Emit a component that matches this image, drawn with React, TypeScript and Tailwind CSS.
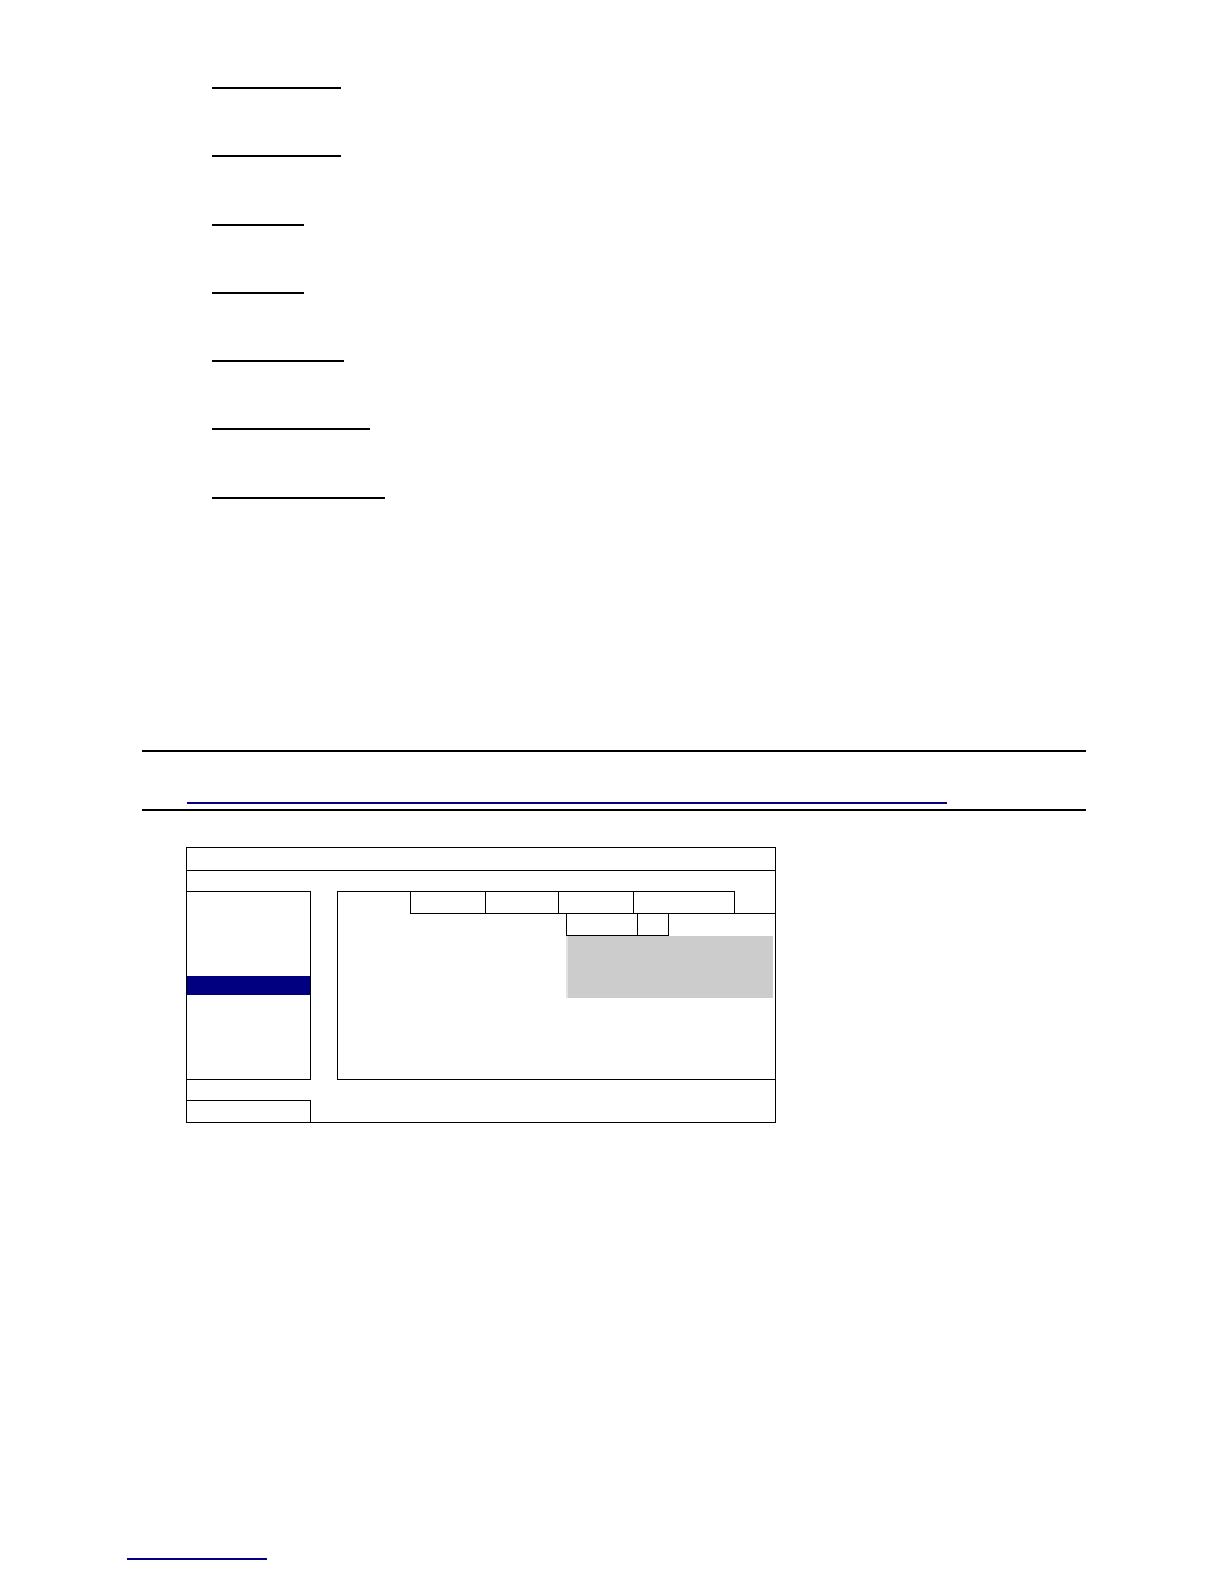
import React from "react";

const underlines = [129, 129, 92, 92, 132, 158, 173];

export default function App() {
  return (
    <div className="w-[1224px] h-[1584px] bg-white flex flex-col" style={{ fontFamily: '"Liberation Sans", Arial, sans-serif' }}>
      {/* link underlines */}
      <div className="pl-[212px] pt-[87px] flex flex-col gap-[66.3px]">
        {underlines.map((w, i) => (
          <div key={i} className="h-[2px] bg-black" style={{ width: w }} />
        ))}
      </div>

      {/* section header rules */}
      <div className="ml-[142px] mt-[251px] w-[944px] h-[2px] bg-black" />
      <div className="ml-[187px] mt-[50px] w-[760px] h-[2px] bg-[#000080]" />
      <div className="ml-[142px] mt-[5px] w-[944px] h-[2px] bg-black" />

      {/* dialog */}
      <div className="ml-[186px] mt-[36px] w-[590px] h-[276px] border border-black flex flex-col">
        <div className="h-[23px] border-b border-black" />
        <div className="h-[20px]" />
        <div className="h-[189px] flex">
          <div className="w-[124px] border-t border-r border-b border-black">
            <div className="mt-[84px] h-[19px] bg-[#000080]" />
          </div>
          <div className="ml-[26px] flex-1 border-l border-b border-black flex flex-col">
            <div className="h-[23px] flex">
              <div className="w-[72px] border-t border-black" />
              <div className="w-[76px] border border-black" />
              <div className="w-[73px] border-t border-r border-b border-black" />
              <div className="w-[75px] border-t border-r border-b border-black" />
              <div className="w-[101px] border-t border-r border-b border-black" />
              <div className="flex-1 border-b border-black" />
            </div>
            <div className="h-[22px] flex ml-[228px]">
              <div className="w-[72px] border-l border-r border-b border-black" />
              <div className="w-[31px] border-r border-b border-black" />
            </div>
            <div className="ml-[228px] w-[207px] h-[62px] bg-[#cccccc] border-l-2 border-[#e2e2e2]" />
          </div>
        </div>
        <div className="h-[20px]" />
        <div className="w-[124px] h-[22px] border-t border-r border-black" />
      </div>

      {/* footer link */}
      <div className="ml-[127px] mt-[435px] w-[140px] h-[2px] bg-[#000080]" />
    </div>
  );
}
